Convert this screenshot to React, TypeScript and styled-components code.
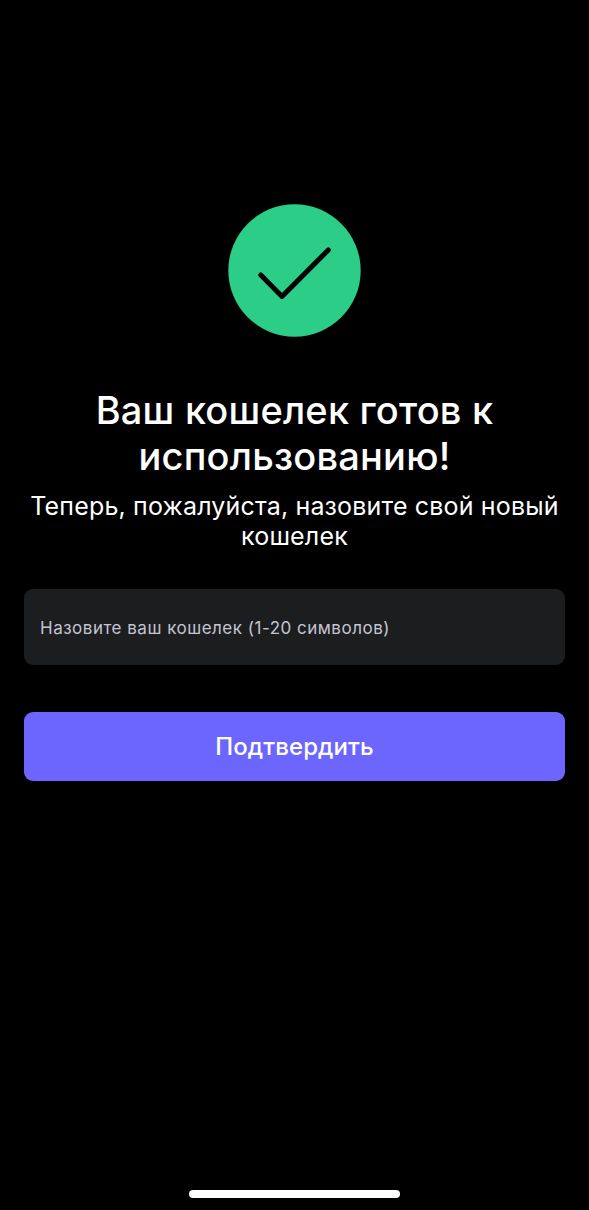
import React from 'react';
import styled, { createGlobalStyle } from 'styled-components';

const GlobalStyle = createGlobalStyle`
  * { box-sizing: border-box; }
  body { margin: 0; background: #000; font-family: Inter, "Noto Sans", sans-serif; }
`;

const Screen = styled.main`
  min-height: 1210px;
  padding: 204px 24px 12px;
  display: flex;
  flex-direction: column;
  align-items: center;
  background: #000;
  color: #fff;
`;

const SuccessMark = styled.svg`
  width: 133px;
  height: 133px;
  display: block;
  flex-shrink: 0;
`;

const Title = styled.h1`
  margin: 50px 0 0;
  font-size: 38px;
  line-height: 46px;
  font-weight: 500;
  letter-spacing: 0.2px;
  text-align: center;
`;

const Subtitle = styled.p`
  margin: 12px 0 0;
  font-size: 25px;
  line-height: 30px;
  letter-spacing: 0.16px;
  text-align: center;
  white-space: nowrap;
`;

const NameInput = styled.input`
  width: 100%;
  height: 76px;
  margin-top: 38px;
  padding: 2px 16px 0;
  border: 0;
  border-radius: 9px;
  outline: 0;
  background: #1c1d1f;
  color: #fff;
  font-family: inherit;
  font-size: 17px;
  letter-spacing: 0.5px;
  &::placeholder { color: #c5c5d2; opacity: 1; }
`;

const ConfirmButton = styled.button`
  width: 100%;
  height: 69px;
  margin-top: 47px;
  padding: 0;
  border: 0;
  border-radius: 9px;
  background: #6c66ff;
  color: #fff;
  font-family: inherit;
  font-size: 24px;
  font-weight: 500;
  letter-spacing: 0.1px;
`;

const HomeIndicator = styled.div`
  width: 211px;
  height: 8px;
  margin-top: auto;
  border-radius: 4px;
  background: #fff;
`;

export default function App() {
  return (
    <>
      <GlobalStyle />
      <Screen>
        <SuccessMark viewBox="0 0 133 133" fill="none" aria-hidden="true">
          <circle cx="66.5" cy="66.5" r="66.2" fill="#2ccd87" />
          <path d="M32.8 71L54 92.4L100.3 46" stroke="#000" strokeWidth="5" strokeLinecap="round" strokeLinejoin="round" />
        </SuccessMark>
        <Title>Ваш кошелек готов к<br />использованию!</Title>
        <Subtitle>Теперь, пожалуйста, назовите свой новый<br />кошелек</Subtitle>
        <NameInput placeholder="Назовите ваш кошелек (1-20 символов)" maxLength={20} />
        <ConfirmButton type="button">Подтвердить</ConfirmButton>
        <HomeIndicator />
      </Screen>
    </>
  );
}
